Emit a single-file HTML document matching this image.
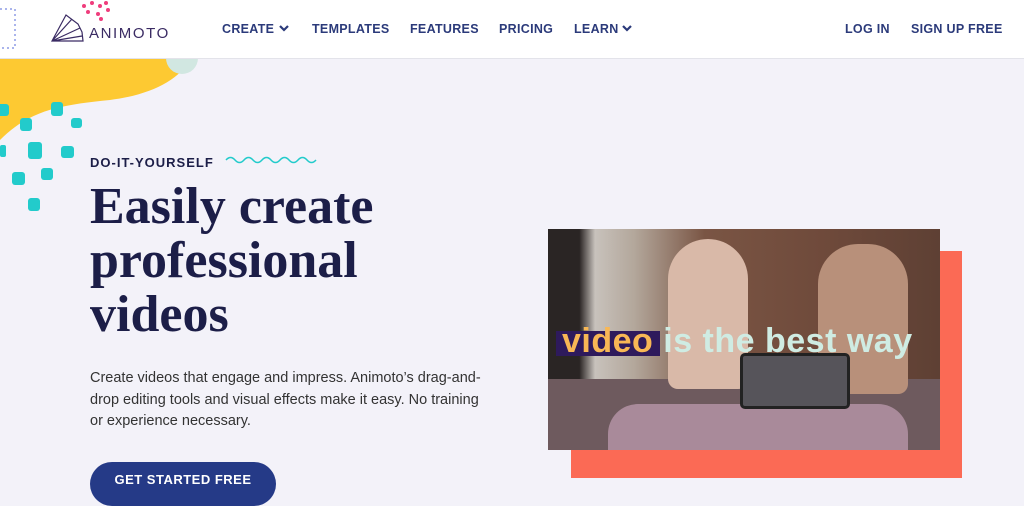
<!DOCTYPE html>
<html><head><style>
*{margin:0;padding:0;box-sizing:border-box}
body{width:1024px;height:485px;overflow:hidden;background:#f3f2f9;font-family:"Liberation Sans",sans-serif;position:relative}
.hdr{position:absolute;left:0;top:0;width:1024px;height:59px;background:#fff;border-bottom:1px solid #e3e3ea}
.nav{position:absolute;top:22px;font-size:12.5px;font-weight:bold;color:#2b3a7a;letter-spacing:.3px}
.h1{position:absolute;left:90px;top:180px;font-family:"Liberation Serif",serif;font-weight:bold;font-size:52px;line-height:54px;color:#1c1e48}
.p{position:absolute;left:90px;top:368px;width:404px;font-size:14.5px;line-height:21.5px;color:#333}
</style></head><body>
<svg style="position:absolute;left:0;top:0" width="1024" height="485">
<path d="M0 59 L190 59 C180 80 150 95 110 100 C60 105 30 110 0 140Z" fill="#fdc932"/>
<circle cx="182" cy="58" r="16" fill="#d1e7e1"/>
<g fill="#22cbcb">
<rect x="-3" y="104" width="12" height="12" rx="3"/><rect x="51" y="102" width="12" height="14" rx="3"/><rect x="71" y="118" width="11" height="10" rx="3"/>
<rect x="20" y="118" width="12" height="13" rx="3"/><rect x="28" y="142" width="14" height="17" rx="3"/><rect x="0" y="145" width="6" height="12" rx="2"/>
<rect x="61" y="146" width="13" height="12" rx="3"/><rect x="12" y="172" width="13" height="13" rx="3"/><rect x="41" y="168" width="12" height="12" rx="3"/>
<rect x="28" y="198" width="12" height="13" rx="3"/></g>
</svg>
<div class="hdr"></div>
<svg style="position:absolute;left:0;top:0" width="1024" height="60">
<rect x="-5" y="9" width="20" height="39" fill="none" stroke="#5468d8" stroke-dasharray="2 3"/>
<g fill="#ef3d7c"><circle cx="84" cy="6" r="2"/><circle cx="92" cy="3" r="2"/><circle cx="100" cy="6" r="2"/><circle cx="106" cy="3" r="2"/><circle cx="88" cy="12" r="2"/><circle cx="98" cy="14" r="2"/><circle cx="108" cy="10" r="2"/><circle cx="101" cy="19" r="2"/></g>
<g fill="none" stroke="#3a2b63" stroke-width="1.2"><path d="M52 41 L66 15 L78 24 L82 32 L83 41Z M52 41 L72 19 M52 41 L80 28 M52 41 L82 36"/></g>
<text x="89" y="38" font-family="Liberation Sans" font-size="15" fill="#3a2b63" letter-spacing="1.6">ANIMOTO</text>
<path d="M280 26l4 4 4-4M623 26l4 4 4-4" stroke="#2b3a7a" stroke-width="2.2" fill="none"/>
</svg>
<div class="nav" style="left:222px">CREATE</div>
<div class="nav" style="left:312px">TEMPLATES</div>
<div class="nav" style="left:410px">FEATURES</div>
<div class="nav" style="left:499px">PRICING</div>
<div class="nav" style="left:574px">LEARN</div>
<div class="nav" style="left:845px">LOG IN</div>
<div class="nav" style="left:911px">SIGN UP FREE</div>
<div style="position:absolute;left:90px;top:155px;font-size:13px;font-weight:bold;color:#1c1e48;letter-spacing:1px">DO-IT-YOURSELF</div>
<svg style="position:absolute;left:225px;top:154px" width="95" height="12"><path d="M1 6 q4.5 -5 9 0 t9 0 t9 0 t9 0 t9 0 t9 0 t9 0 t9 0 t9 0 t9 0" stroke="#22cbcb" stroke-width="1.5" fill="none"/></svg>
<div class="h1">Easily create<br>professional<br>videos</div>
<div class="p">Create videos that engage and impress. Animoto’s drag-and-drop editing tools and visual effects make it easy. No training or experience necessary.</div>
<div style="position:absolute;left:90px;top:462px;width:186px;height:44px;border-radius:22px;background:#253a87;color:#fff;font-size:13px;font-weight:bold;text-align:center;line-height:36px;letter-spacing:.5px">GET STARTED FREE</div>
<div style="position:absolute;left:571px;top:251px;width:391px;height:227px;background:#fb6a55"></div>
<div style="position:absolute;left:548px;top:229px;width:392px;height:221px;background:linear-gradient(90deg,#2a2524 0,#2a2524 8%,#c8c2bc 12%,#b3a79b 22%,#7a5544 40%,#6f4a3b 70%,#5e4034 100%);overflow:hidden">
<div style="position:absolute;left:0;top:150px;width:392px;height:71px;background:#6e5a5e"></div>
<div style="position:absolute;left:60px;top:175px;width:300px;height:46px;background:#a98a9a;border-radius:30px 30px 0 0"></div>
<div style="position:absolute;left:120px;top:10px;width:80px;height:150px;background:#d9b9a8;border-radius:40px 40px 10px 10px"></div>
<div style="position:absolute;left:270px;top:15px;width:90px;height:150px;background:#b8907a;border-radius:40px 40px 10px 10px"></div>
<div style="position:absolute;left:192px;top:124px;width:110px;height:56px;background:#56545a;border:3px solid #222;border-radius:5px"></div>
<div style="position:absolute;left:8px;top:102px;width:104px;height:25px;background:#2e1a5c"></div>
<div style="position:absolute;left:14px;top:93px;font-size:34px;font-weight:bold;color:#f8b755;white-space:nowrap;letter-spacing:.5px">video <span style="color:#cfece3">is the best way</span></div>
</div>
</body></html>
